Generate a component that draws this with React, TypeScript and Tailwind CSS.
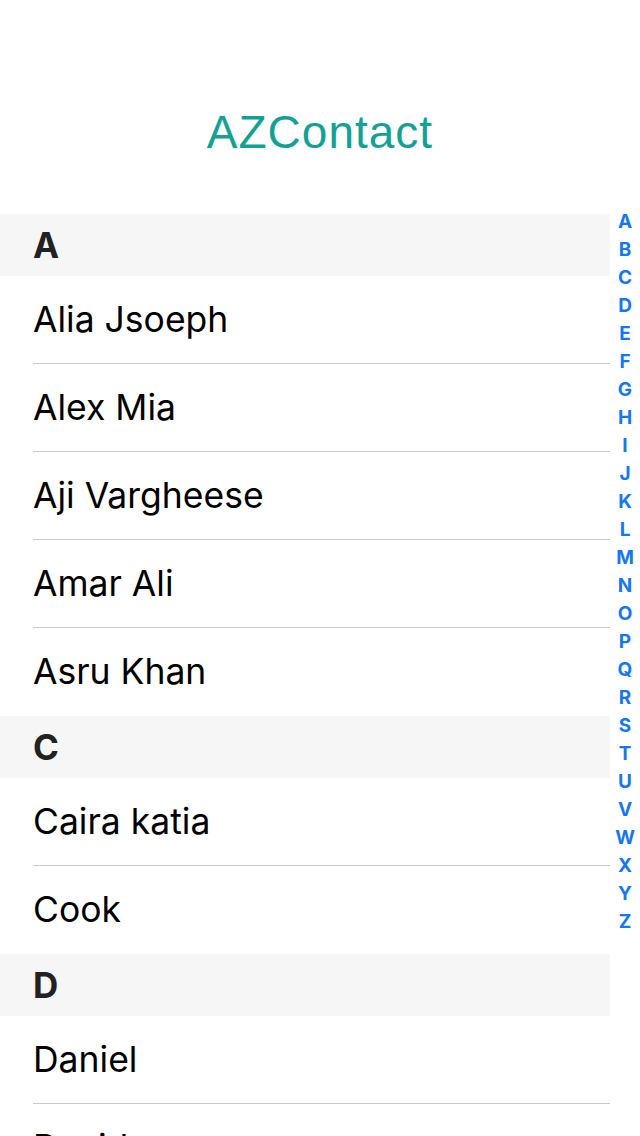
const sections = [
  { letter: 'A', names: ['Alia Jsoeph', 'Alex Mia', 'Aji Vargheese', 'Amar Ali', 'Asru Khan'] },
  { letter: 'C', names: ['Caira katia', 'Cook'] },
  { letter: 'D', names: ['Daniel', 'David'] },
];

const index = 'ABCDEFGHIJKLMNOPQRSTUVWXYZ'.split('');

export default function App() {
  return (
    <div className="w-[640px] h-[1136px] overflow-hidden bg-white" style={{ fontFamily: 'Inter, "Noto Sans", sans-serif' }}>
      <div className="h-[214px] flex justify-center pt-[109px]">
        <h1
          className="text-[46px] leading-[46px] tracking-[1px] text-[#13a196]"
          style={{ fontFamily: '"Liberation Sans", Arial, sans-serif' }}
        >
          AZContact
        </h1>
      </div>
      <div className="flex">
        <div className="w-[610px]">
          {sections.map((s) => (
            <div key={s.letter}>
              <div className="h-[62px] bg-[#f6f6f6] flex items-center pl-[33px] text-[35px] font-bold text-[#222]">
                {s.letter}
              </div>
              {s.names.map((n, i) => (
                <div
                  key={n}
                  className={`h-[88px] ml-[33px] flex items-center text-[35.5px] text-black ${i < s.names.length - 1 ? 'border-b border-[#c8c8c8]' : ''}`}
                >
                  {n}
                </div>
              ))}
            </div>
          ))}
        </div>
        <div className="w-[30px] -mt-[6px] flex flex-col items-center">
          {index.map((l) => (
            <span key={l} className="h-[28px] leading-[28px] text-[19px] font-bold text-[#1677ee]">
              {l}
            </span>
          ))}
        </div>
      </div>
    </div>
  );
}
